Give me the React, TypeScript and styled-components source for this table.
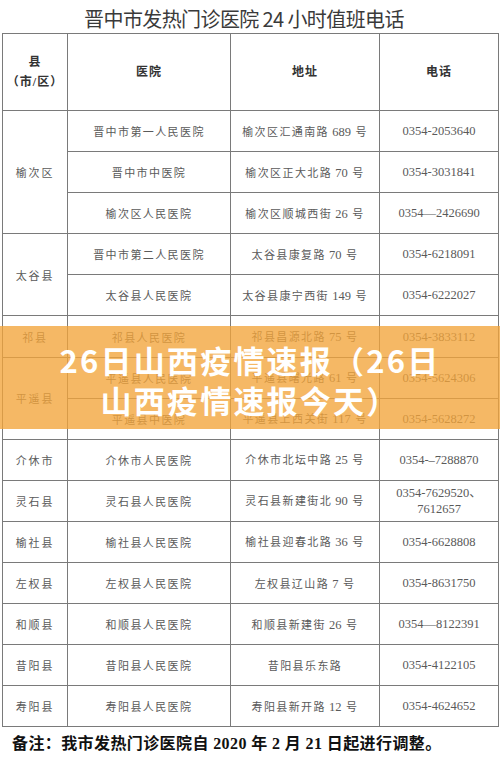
import React, { ReactElement } from "react";
import { styled, createGlobalStyle } from "styled-components";

type Row = {
  county?: string;
  span?: number;
  hospital: string;
  address: string;
  phone: string[];
};

const rows: Row[] = [
  { county: "榆次区", span: 3, hospital: "晋中市第一人民医院", address: "榆次区汇通南路 689 号", phone: ["0354-2053640"] },
  { hospital: "晋中市中医院", address: "榆次区正大北路 70 号", phone: ["0354-3031841"] },
  { hospital: "榆次区人民医院", address: "榆次区顺城西街 26 号", phone: ["0354—2426690"] },
  { county: "太谷县", span: 2, hospital: "晋中市第二人民医院", address: "太谷县康复路 70 号", phone: ["0354-6218091"] },
  { hospital: "太谷县人民医院", address: "太谷县康宁西街 149 号", phone: ["0354-6222027"] },
  { county: "祁县", hospital: "祁县人民医院", address: "祁县昌源北路 75 号", phone: ["0354-3833112"] },
  { county: "平遥县", span: 2, hospital: "平遥县人民医院", address: "平遥县曙光路 61 号", phone: ["0354-5624306"] },
  { hospital: "平遥县中医院", address: "平遥县上西关街 117 号", phone: ["0354-5628272"] },
  { county: "介休市", hospital: "介休市人民医院", address: "介休市北坛中路 25 号", phone: ["0354-–7288870"] },
  { county: "灵石县", hospital: "灵石县人民医院", address: "灵石县新建街北 90 号", phone: ["0354-7629520、", "7612657"] },
  { county: "榆社县", hospital: "榆社县人民医院", address: "榆社县迎春北路 36 号", phone: ["0354-6628808"] },
  { county: "左权县", hospital: "左权县人民医院", address: "左权县辽山路 7 号", phone: ["0354-8631750"] },
  { county: "和顺县", hospital: "和顺县人民医院", address: "和顺县新建街 26 号", phone: ["0354—8122391"] },
  { county: "昔阳县", hospital: "昔阳县人民医院", address: "昔阳县乐东路", phone: ["0354-4122105"] },
  { county: "寿阳县", hospital: "寿阳县人民医院", address: "寿阳县新开路 12 号", phone: ["0354-4624652"] },
];

// 숫자 부분은 자간 없이 표시
function spaced(text: string) {
  return text.split(/(\s?\d+\s?)/).map((part, i) =>
    /\d/.test(part) ? <Num key={i}>{part}</Num> : <React.Fragment key={i}>{part}</React.Fragment>
  );
}

const GlobalStyle = createGlobalStyle`
  html, body {
    margin: 0;
    padding: 0;
    background: #fff;
  }
  body {
    width: 500px;
    height: 757px;
    overflow: hidden;
    font-family: "Liberation Serif", "Noto Sans CJK SC", serif;
  }
`;

export default function App(): ReactElement {
  return (
    <Page>
      <GlobalStyle />
      <Title>晋中市发热门诊医院 24 小时值班电话</Title>
      <Table>
        <colgroup>
          <col style={{ width: 65 }} />
          <col style={{ width: 163 }} />
          <col style={{ width: 149 }} />
          <col style={{ width: 119 }} />
        </colgroup>
        <thead>
          <HeadRow>
            <HeadCell>
              县
              <br />
              （市/区）
            </HeadCell>
            <HeadCell>医院</HeadCell>
            <HeadCell>地址</HeadCell>
            <HeadCell>电话</HeadCell>
          </HeadRow>
        </thead>
        <tbody>
          {rows.map(row => (
            <BodyRow key={row.hospital}>
              {row.county && (
                <Cell $gap={1.8} rowSpan={row.span ?? 1}>
                  {row.county}
                </Cell>
              )}
              <Cell $gap={1.4}>{row.hospital}</Cell>
              <Cell $gap={1.4}>{spaced(row.address)}</Cell>
              <PhoneCell>
                {row.phone.map(p => (
                  <div key={p}>{p}</div>
                ))}
              </PhoneCell>
            </BodyRow>
          ))}
        </tbody>
      </Table>
      <Note>备注：我市发热门诊医院自 2020 年 2 月 21 日起进行调整。</Note>
      <Banner>
        <BannerText>
          26日山西疫情速报（26日
          <br />
          山西疫情速报今天）
        </BannerText>
      </Banner>
    </Page>
  );
}

const Page = styled.div`
  position: relative;
  width: 500px;
  height: 757px;
  overflow: hidden;
  background: #fff;
`;

const Title = styled.div`
  height: 33px;
  line-height: 38px;
  text-align: center;
  font-family: "Noto Sans CJK SC", sans-serif;
  font-size: 20px;
  letter-spacing: -0.6px;
  color: #3a3a3a;
  margin-left: -12px;
`;

const Table = styled.table`
  margin-left: 2px;
  width: 496px;
  table-layout: fixed;
  border-collapse: collapse;
  color: #5a5a5a;
`;

const HeadRow = styled.tr`
  height: 77px;
`;

const HeadCell = styled.th`
  border: 1px solid #7a7a7a;
  font-family: "Liberation Serif", "Noto Sans CJK SC", serif;
  font-size: 12px;
  font-weight: 700;
  line-height: 20px;
  letter-spacing: 1px;
  color: #333;
  text-align: center;
  vertical-align: middle;
  padding: 0;
`;

const BodyRow = styled.tr`
  height: 41.1px;
`;

const Cell = styled.td<{ $gap: number }>`
  border: 1px solid #7a7a7a;
  font-size: 11px;
  letter-spacing: ${props => props.$gap}px;
  text-align: center;
  vertical-align: middle;
  padding: 0;
  white-space: nowrap;
`;

const Num = styled.span`
  font-size: 12.5px;
  letter-spacing: 0;
  margin-right: 1.4px;
`;

const PhoneCell = styled.td`
  border: 1px solid #7a7a7a;
  font-size: 12.5px;
  line-height: 16px;
  text-align: center;
  vertical-align: middle;
  padding: 0;
  white-space: nowrap;
`;

const Note = styled.div`
  padding: 7px 0 0 12px;
  font-family: "Liberation Serif", "Noto Sans CJK SC", serif;
  font-size: 16px;
  line-height: 20px;
  font-weight: 700;
  letter-spacing: 0.4px;
  color: #111;
`;

const Banner = styled.div`
  position: absolute;
  left: 0;
  top: 326px;
  width: 500px;
  height: 103px;
  background: rgba(242, 164, 58, 0.78);
  display: flex;
  align-items: center;
  justify-content: center;
`;

const BannerText = styled.div`
  font-family: "Noto Sans CJK SC", sans-serif;
  font-size: 31px;
  font-weight: 700;
  line-height: 40px;
  letter-spacing: 2.2px;
  color: #fff;
  text-align: center;
  margin-top: 5px;
`;
